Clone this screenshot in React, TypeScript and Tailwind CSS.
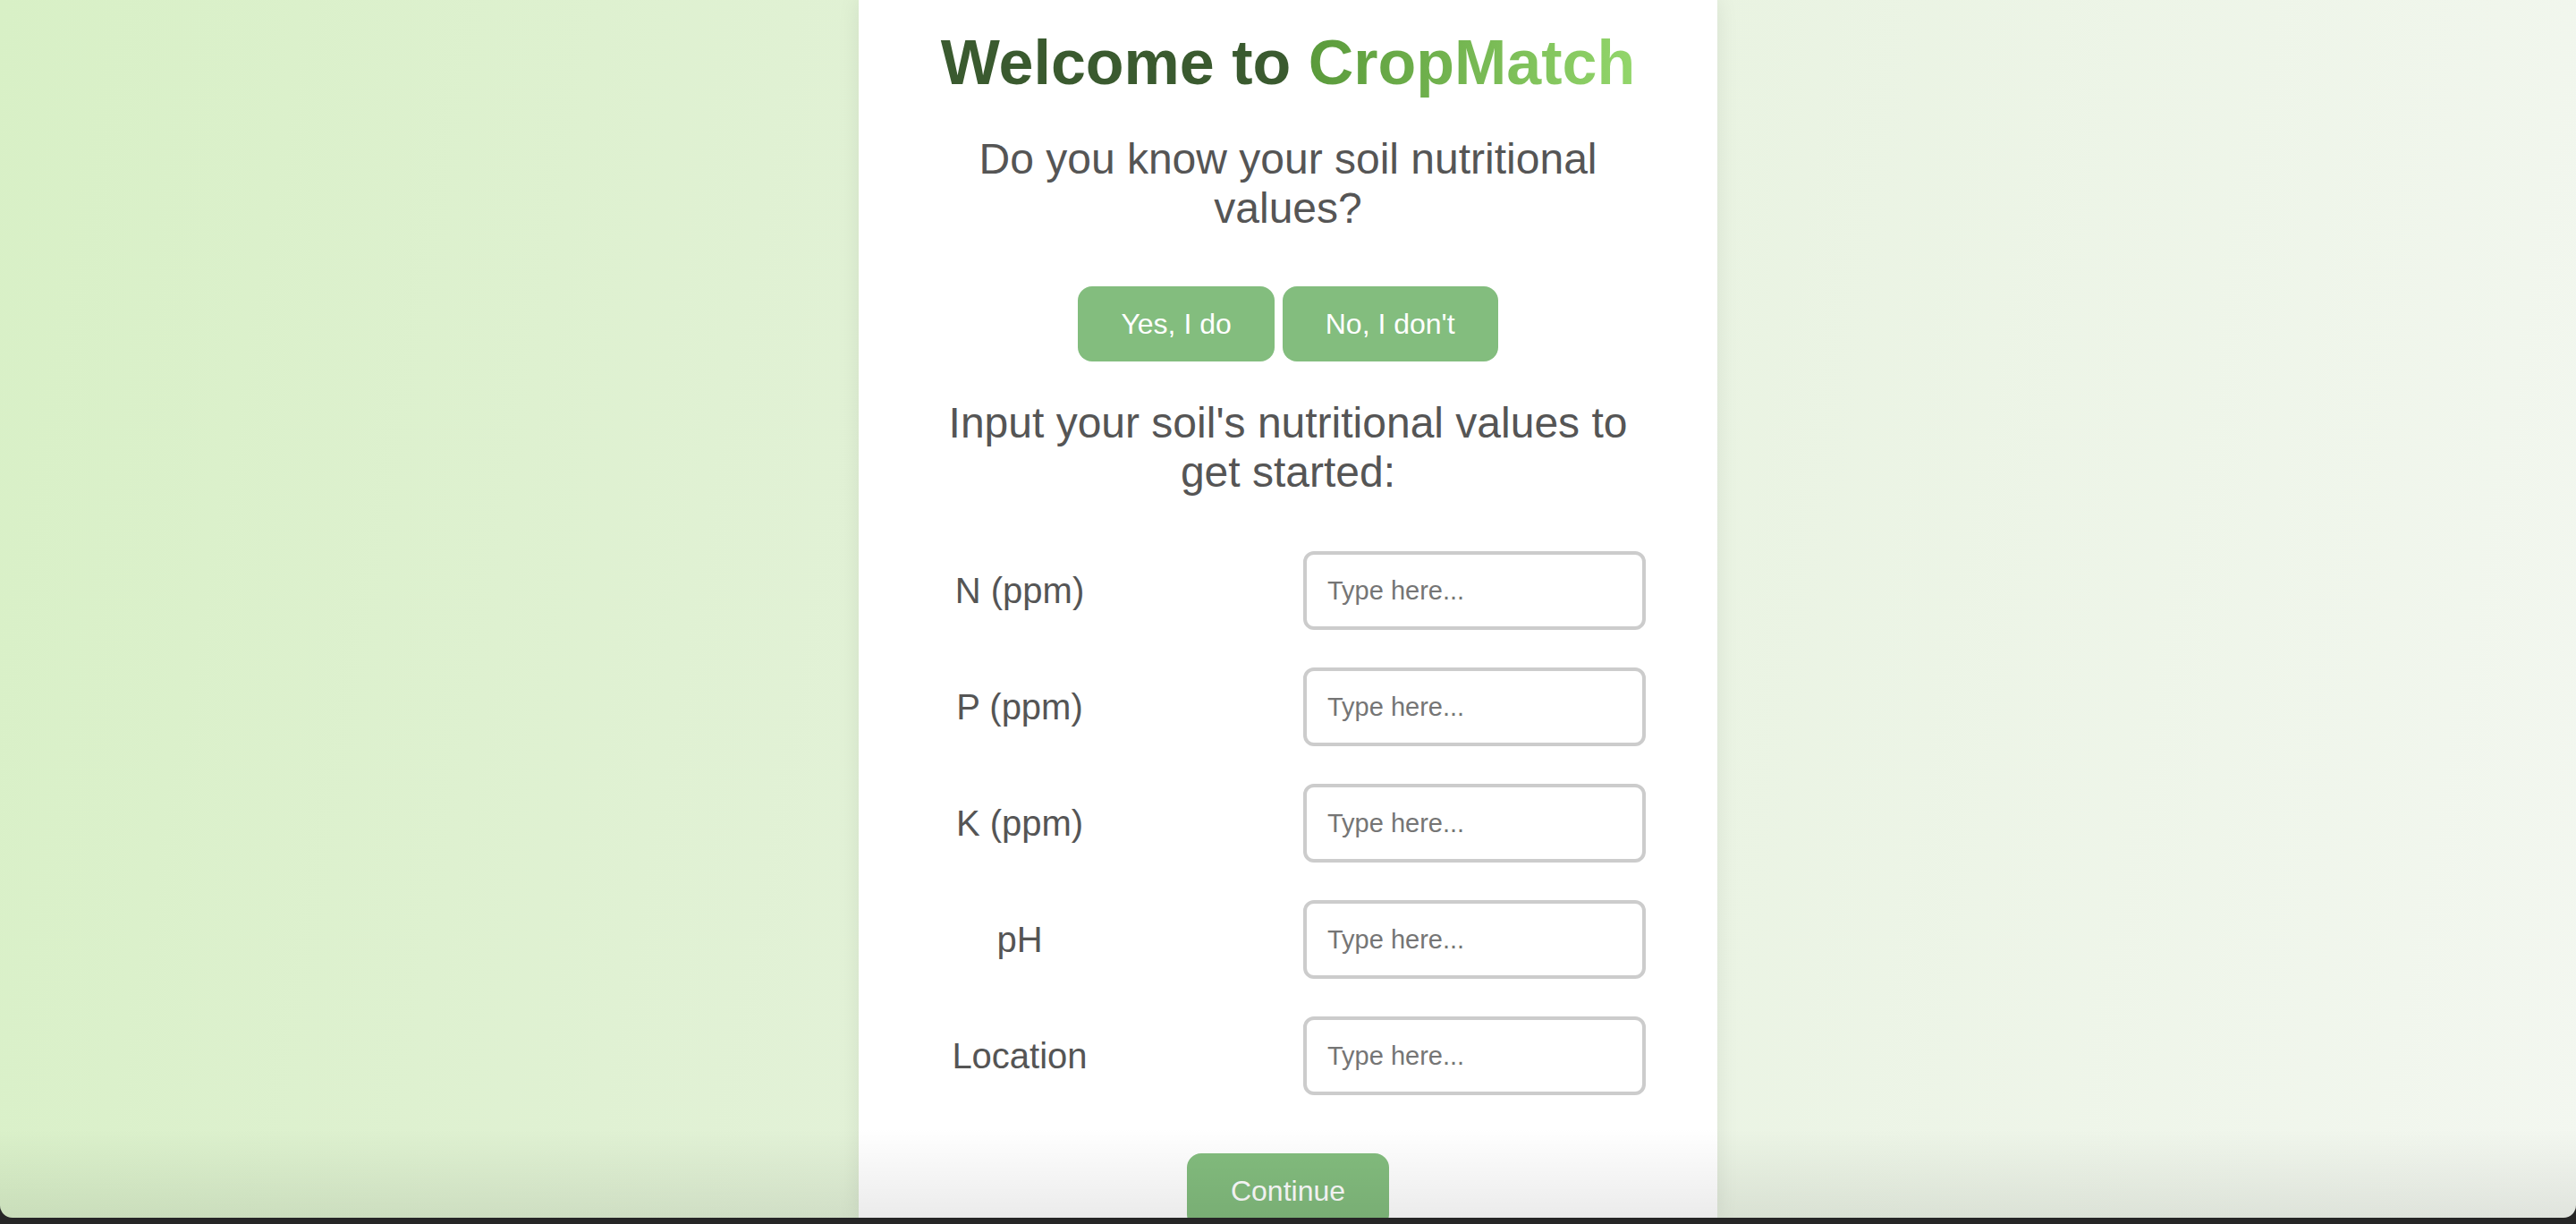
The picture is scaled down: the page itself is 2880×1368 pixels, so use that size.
import { useState } from "react";

const fields = ["N (ppm)", "P (ppm)", "K (ppm)", "pH", "Location"];

export default function App() {
  const [values, setValues] = useState<Record<string, string>>({});

  return (
    <div className="h-[1368px] w-full bg-[#262626] font-['Liberation_Sans',Arial,sans-serif]">
      <div className="relative h-[1361px] overflow-hidden rounded-b-[14px] bg-[linear-gradient(100deg,#d8f0c6,#e6f2dd_50%,#f3f7f0)]">
        <div className="mx-auto flex h-full w-[960px] flex-col items-center bg-white px-[80px] pt-[30px] shadow-[0_0_24px_rgba(0,0,0,0.08)]">
          <h1 className="text-[70px] font-bold leading-[80px] text-[#3a5a2f]">
            Welcome to{" "}
            <span className="bg-[linear-gradient(90deg,#5a9a3b,#93d66b)] bg-clip-text text-transparent">
              CropMatch
            </span>
          </h1>

          <h2 className="mt-[40px] text-center text-[48px] leading-[55px] text-[#555555]">
            Do you know your soil nutritional values?
          </h2>

          <div className="mt-[60px] flex gap-[9px]">
            <button className="h-[84px] rounded-[16px] bg-[#83bd7e] px-[48px] text-[32px] text-white">
              Yes, I do
            </button>
            <button className="h-[84px] rounded-[16px] bg-[#83bd7e] px-[48px] text-[32px] text-white">
              No, I don't
            </button>
          </div>

          <h2 className="mt-[41px] text-center text-[48px] leading-[55px] text-[#555555]">
            Input your soil's nutritional values to get started:
          </h2>

          <div className="mt-[61px] flex w-full flex-col gap-[42px]">
            {fields.map((f) => (
              <div key={f} className="flex h-[88px] items-center justify-between">
                <label className="w-[200px] text-center text-[40px] text-[#555555]">{f}</label>
                <input
                  value={values[f] || ""}
                  onChange={(e) => setValues({ ...values, [f]: e.target.value })}
                  placeholder="Type here..."
                  className="h-[88px] w-[383px] rounded-[12px] border-[4px] border-[#cccccc] pl-[23px] text-[29px] text-[#333] outline-none placeholder:text-[#757575]"
                />
              </div>
            ))}
          </div>

          <button className="mt-[65px] h-[84px] shrink-0 rounded-[16px] bg-[#83bd7e] px-[49px] text-[32px] text-white">
            Continue
          </button>
        </div>

        <div className="pointer-events-none absolute bottom-0 left-0 h-[100px] w-full bg-[linear-gradient(180deg,rgba(0,0,0,0),rgba(0,0,0,0.08))]" />
      </div>
    </div>
  );
}
